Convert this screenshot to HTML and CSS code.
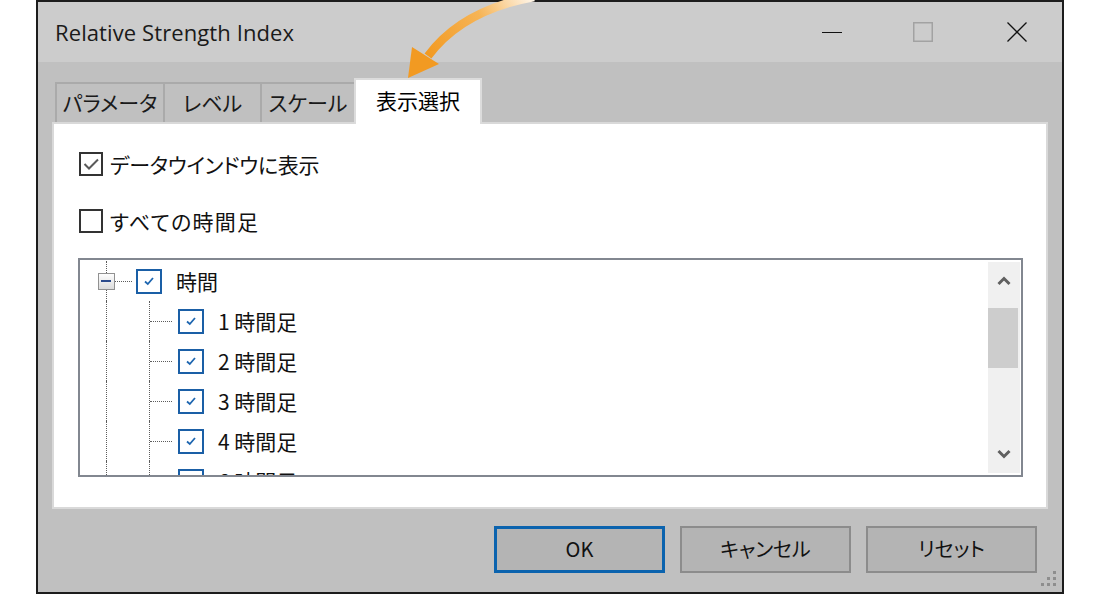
FILE: index.html
```html
<!DOCTYPE html>
<html lang="ja">
<head>
    <meta charset="UTF-8">
    <meta name="viewport" content="width=device-width, initial-scale=1.0">
    <title>Relative Strength Index</title>
    <link rel="stylesheet" href="styles.css">
</head>
<body>
    <div class="window">
        <div class="titlebar">
            <span class="title">Relative Strength Index</span>
            <div class="controls">
                <span class="ctl">
                    <svg width="20" height="20" viewBox="0 0 20 20"><path d="M0 10.5H20" stroke="#111" stroke-width="1"/></svg>
                </span>
                <span class="ctl">
                    <svg width="20" height="20" viewBox="0 0 20 20"><rect x="0.75" y="0.75" width="18.5" height="18.5" fill="none" stroke="#a2a2a2" stroke-width="1.5"/></svg>
                </span>
                <span class="ctl">
                    <svg width="20" height="20" viewBox="0 0 20 20"><path d="M0.5 0.5L19.5 19.5M19.5 0.5L0.5 19.5" stroke="#111" stroke-width="1.3"/></svg>
                </span>
            </div>
        </div>

        <div class="tabs">
            <div class="tab">パラメータ</div>
            <div class="tab">レベル</div>
            <div class="tab">スケール</div>
            <div class="tab active">表示選択</div>
        </div>

        <div class="panel">
            <div class="opt">
                <span class="box">
                    <svg width="20" height="20" viewBox="0 0 20 20"><path d="M3.5 10L8 14.5L17 5.5" fill="none" stroke="#5a5a5a" stroke-width="2"/></svg>
                </span>
                データウインドウに表示
            </div>
            <div class="opt wide">
                <span class="box"></span>
                すべての時間足
            </div>

            <div class="tree">
                <div class="tree-list">
                    <div class="row">
                        <div class="stem">
                            <span class="vline"></span>
                            <span class="expander"><span class="minus"></span></span>
                            <span class="vline"></span>
                        </div>
                        <span class="hline root-link"></span>
                        <span class="tick root">
                            <svg width="14" height="14" viewBox="0 0 14 14"><path d="M3 7.5L5.8 10L11 4" fill="none" stroke="#1e66b0" stroke-width="1.8"/></svg>
                        </span>
                        <span class="label">時間</span>
                    </div>
                    <div class="row">
                        <div class="stem"><span class="vline"></span></div>
                        <span class="lane"></span>
                        <span class="hline"></span>
                        <span class="tick">
                            <svg width="14" height="14" viewBox="0 0 14 14"><path d="M3 7.5L5.8 10L11 4" fill="none" stroke="#1e66b0" stroke-width="1.8"/></svg>
                        </span>
                        <span class="label">1 時間足</span>
                    </div>
                    <div class="row">
                        <div class="stem"><span class="vline"></span></div>
                        <span class="lane"></span>
                        <span class="hline"></span>
                        <span class="tick">
                            <svg width="14" height="14" viewBox="0 0 14 14"><path d="M3 7.5L5.8 10L11 4" fill="none" stroke="#1e66b0" stroke-width="1.8"/></svg>
                        </span>
                        <span class="label">2 時間足</span>
                    </div>
                    <div class="row">
                        <div class="stem"><span class="vline"></span></div>
                        <span class="lane"></span>
                        <span class="hline"></span>
                        <span class="tick">
                            <svg width="14" height="14" viewBox="0 0 14 14"><path d="M3 7.5L5.8 10L11 4" fill="none" stroke="#1e66b0" stroke-width="1.8"/></svg>
                        </span>
                        <span class="label">3 時間足</span>
                    </div>
                    <div class="row">
                        <div class="stem"><span class="vline"></span></div>
                        <span class="lane"></span>
                        <span class="hline"></span>
                        <span class="tick">
                            <svg width="14" height="14" viewBox="0 0 14 14"><path d="M3 7.5L5.8 10L11 4" fill="none" stroke="#1e66b0" stroke-width="1.8"/></svg>
                        </span>
                        <span class="label">4 時間足</span>
                    </div>
                    <div class="row">
                        <div class="stem"><span class="vline"></span></div>
                        <span class="lane"></span>
                        <span class="hline"></span>
                        <span class="tick">
                            <svg width="14" height="14" viewBox="0 0 14 14"><path d="M3 7.5L5.8 10L11 4" fill="none" stroke="#1e66b0" stroke-width="1.8"/></svg>
                        </span>
                        <span class="label">6 時間足</span>
                    </div>
                </div>
                <div class="scrollbar">
                    <span class="sb-arrow">
                        <svg width="14" height="10" viewBox="0 0 14 10"><path d="M1.5 8L7 2.5L12.5 8" fill="none" stroke="#606060" stroke-width="3"/></svg>
                    </span>
                    <span class="thumb"></span>
                    <span class="sb-space"></span>
                    <span class="sb-arrow">
                        <svg width="14" height="10" viewBox="0 0 14 10"><path d="M1.5 2L7 7.5L12.5 2" fill="none" stroke="#606060" stroke-width="3"/></svg>
                    </span>
                </div>
            </div>
        </div>

        <div class="buttons">
            <button class="btn default">OK</button>
            <button class="btn">キャンセル</button>
            <button class="btn">リセット</button>
        </div>

        <svg class="grip" width="18" height="18" viewBox="0 0 18 18">
            <rect x="12" y="0" width="3" height="3" fill="#8e8e8e"/>
            <rect x="6" y="6" width="3" height="3" fill="#8e8e8e"/>
            <rect x="12" y="6" width="3" height="3" fill="#8e8e8e"/>
            <rect x="0" y="12" width="3" height="3" fill="#8e8e8e"/>
            <rect x="6" y="12" width="3" height="3" fill="#8e8e8e"/>
            <rect x="12" y="12" width="3" height="3" fill="#8e8e8e"/>
        </svg>
    </div>

    <!-- orange pointer drawn over the dialog -->
    <svg class="pointer" width="160" height="90" viewBox="390 -5 160 90">
        <defs>
            <linearGradient id="fade" x1="532" y1="-3" x2="430" y2="60" gradientUnits="userSpaceOnUse">
                <stop offset="0" stop-color="#fff6ea"/>
                <stop offset="0.45" stop-color="#f6b456"/>
                <stop offset="1" stop-color="#f29a22"/>
            </linearGradient>
        </defs>
        <path d="M534 -3 Q462 10 428 56" fill="none" stroke="url(#fade)" stroke-width="8.5"/>
        <polygon points="412,47 439,64 408,78" fill="#f29a22"/>
    </svg>
</body>
</html>
```

FILE: styles.css
```css
body {
    margin: 0;
    width: 1100px;
    height: 594px;
    background: #ffffff;
    font-family: "Noto Sans CJK JP", "Noto Sans", sans-serif;
    font-feature-settings: "palt";
    color: #111;
    position: relative;
    overflow: hidden;
}

.window {
    position: relative;
    box-sizing: border-box;
    width: 1028px;
    height: 594px;
    margin-left: 36px;
    border: 2px solid #1c1c1c;
    background: #c0c0c0;
    display: flex;
    flex-direction: column;
}

/* title bar */
.titlebar {
    height: 60px;
    background: #cccccc;
    display: flex;
    align-items: center;
    justify-content: space-between;
    padding-left: 17px;
}

.title {
    font-family: "Open Sans", "Noto Sans", sans-serif;
    font-size: 22px;
    letter-spacing: 0.1px;
    color: #1a1a1a;
}

.controls {
    display: flex;
    height: 100%;
}

.ctl {
    width: 91px;
    display: flex;
    align-items: center;
    justify-content: center;
}

.ctl:nth-child(2) {
    padding-right: 3px;
}

/* tabs */
.tabs {
    height: 60px;
    display: flex;
    align-items: flex-end;
    padding-left: 17px;
    position: relative;
    z-index: 1;
}

.tab {
    box-sizing: border-box;
    height: 40px;
    border-top: 2px solid #aaaaaa;
    border-left: 2px solid #aaaaaa;
    display: flex;
    align-items: center;
    justify-content: center;
    font-size: 21px;
    color: #1a1a1a;
    padding-bottom: 2px;
}

.tab:nth-child(1) { width: 108px; }
.tab:nth-child(2) { width: 97px; }
.tab:nth-child(3) { width: 94px; }

.tab.active {
    width: 128px;
    height: 46px;
    margin-bottom: -2px;
    background: #ffffff;
    border: 2px solid #dcdcdc;
    border-bottom: none;
    padding-bottom: 4px;
    color: #000;
}

/* panel */
.panel {
    box-sizing: border-box;
    height: 387px;
    margin: 0 14px;
    background: #ffffff;
    border: 2px solid #d9d9d9;
    padding: 27px 23px 0 24px;
}

.opt {
    display: flex;
    align-items: center;
    height: 25px;
    margin: 0 0 32px 1px;
    font-size: 21px;
    letter-spacing: -0.3px;
}

.opt.wide {
    letter-spacing: 1.2px;
}

.box {
    box-sizing: border-box;
    width: 24px;
    height: 24px;
    border: 2px solid #333333;
    margin-right: 7px;
    display: flex;
    align-items: center;
    justify-content: center;
}

/* tree view */
.tree {
    box-sizing: border-box;
    height: 219px;
    margin-top: -7px;
    border: 2px solid #828790;
    display: flex;
}

.tree-list {
    flex: 1;
    overflow: hidden;
    padding-top: 1px;
}

.row {
    display: flex;
    align-items: center;
    height: 40px;
}

.stem {
    width: 16px;
    margin-left: 18px;
    align-self: stretch;
    display: flex;
    flex-direction: column;
    align-items: center;
}

.vline {
    flex: 1;
    width: 0;
    border-left: 1px dotted #5c5c5c;
}

.expander {
    box-sizing: border-box;
    width: 17px;
    height: 17px;
    border: 1px solid #919191;
    background: linear-gradient(#fdfdfd, #dcdcdc);
    display: flex;
    align-items: center;
    justify-content: center;
}

.minus {
    width: 10px;
    height: 2px;
    background: #2c4b8c;
}

.hline {
    width: 22px;
    height: 0;
    border-top: 1px dotted #5c5c5c;
}

.root-link {
    width: 17px;
    margin-left: 1px;
}

.lane {
    align-self: stretch;
    width: 0;
    margin-left: 35px;
    border-left: 1px dotted #5c5c5c;
}

.tick {
    box-sizing: border-box;
    width: 26px;
    height: 25px;
    border: 2px solid #1a5fa6;
    margin-left: 6px;
    display: flex;
    align-items: center;
    justify-content: center;
}

.tick.root {
    margin-left: 4px;
}

.label {
    margin-left: 14px;
    font-size: 21px;
    color: #111;
}

.scrollbar {
    width: 32px;
    margin: 2px 1px 2px 0;
    background: #f0f0f0;
    display: flex;
    flex-direction: column;
    align-items: center;
}

.sb-arrow {
    height: 38px;
    display: flex;
    align-items: center;
    justify-content: center;
}

.thumb {
    width: 30px;
    height: 60px;
    margin-top: 8px;
    margin-right: 2px;
    background: #cdcdcd;
}

.sb-space {
    flex: 1;
}

/* bottom buttons */
.buttons {
    display: flex;
    justify-content: flex-end;
    gap: 15px;
    padding: 17px 25px 0 0;
}

.btn {
    box-sizing: border-box;
    width: 171px;
    height: 47px;
    background: #b4b4b4;
    border: 2px solid #8c8c8c;
    font-family: "Noto Sans CJK JP", "Noto Sans", sans-serif;
    font-feature-settings: "palt";
    font-size: 20px;
    color: #111;
    padding: 0 0 2px 0;
}

.btn.default {
    border: 3px solid #0b63ae;
}

.grip {
    position: absolute;
    right: 3px;
    bottom: 3px;
}

.pointer {
    position: absolute;
    left: 390px;
    top: -5px;
}
```
